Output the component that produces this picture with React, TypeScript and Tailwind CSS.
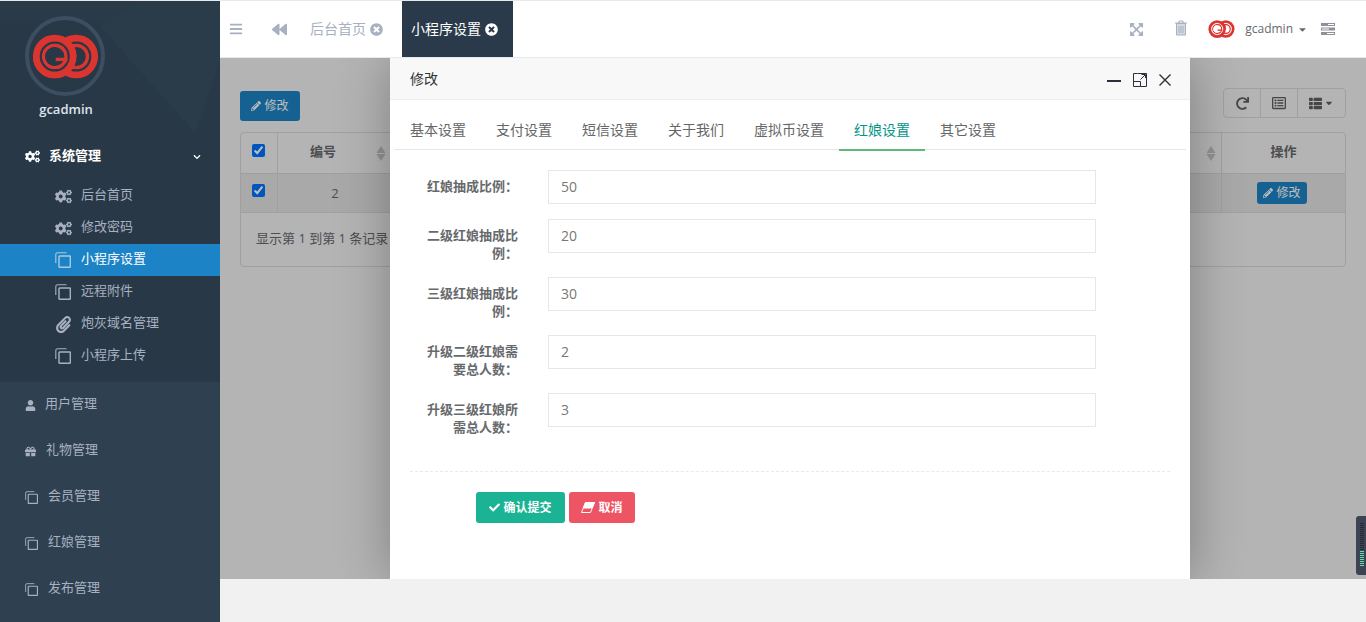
import { useId } from 'react'
import {
  FaBackward, FaBars, FaCaretDown, FaCheck, FaChevronDown, FaCogs, FaExpandArrowsAlt,
  FaGift, FaPaperclip, FaPencilAlt, FaRedo, FaRegListAlt, FaThList, FaTimesCircle, FaUser,
} from 'react-icons/fa'

function CopyIcon({ className }: { className?: string }) {
  return (
    <svg viewBox="0 0 16 16" className={className} fill="none" stroke="currentColor" strokeWidth="1.1">
      <path d="M11.5 .8H2.5a1.7 1.7 0 0 0-1.7 1.7V11" />
      <rect x="4" y="4" width="11.3" height="11.3" rx="0.6" strokeWidth="1.4" />
    </svg>
  )
}

function Logo({ gap, className }: { gap: string; className?: string }) {
  const id = useId()
  return (
    <svg viewBox="0 0 68 46" className={className}>
      <defs>
        <clipPath id={id}>
          <rect x="34" y="0" width="34" height="23" />
          <rect x="0" y="23" width="34" height="23" />
        </clipPath>
      </defs>
      <g fill="none">
        <circle cx="45" cy="23" r="18.5" stroke="#dc3530" strokeWidth="7.5" />
        <circle cx="45" cy="23" r="11.5" stroke="#dc3530" strokeWidth="3.5" />
        <circle cx="45" cy="23" r="14.4" stroke={gap} strokeWidth="2" />
        <circle cx="23" cy="23" r="18.5" stroke="#dc3530" strokeWidth="7.5" />
        <circle cx="23" cy="23" r="11.5" stroke="#dc3530" strokeWidth="3.5" />
        <circle cx="23" cy="23" r="14.4" stroke={gap} strokeWidth="2" />
        <g clipPath={`url(#${id})`}>
          <circle cx="23" cy="23" r="18.5" stroke="#dc3530" strokeWidth="7.5" />
          <circle cx="23" cy="23" r="14.4" stroke={gap} strokeWidth="2" />
        </g>
        <circle cx="23" cy="23" r="9.8" fill={gap} />
        <path d="M24 26h12" stroke="#dc3530" strokeWidth="3.5" />
      </g>
    </svg>
  )
}

function HeaderPattern() {
  return (
    <svg viewBox="0 0 220 132" preserveAspectRatio="none" className="absolute inset-0 h-full w-full">
      <rect width="220" height="132" fill="#293846" />
      <polygon points="0,0 220,0 220,60 195,132 100,20 0,20" fill="#2a3a49" />
      <polygon points="100,25 140,0 220,0 220,60 195,132" fill="#2a3b4a" />
    </svg>
  )
}

function SortIcon() {
  return (
    <svg viewBox="0 0 10 15" className="h-[15px] w-[10px]" fill="#c6c6c6">
      <path d="M5 0l4.5 7h-9zM5 15l4.5-7h-9z" />
    </svg>
  )
}

function EraserIcon() {
  return (
    <svg viewBox="0 0 14 11" className="h-[11px] w-[14px]" fill="none" stroke="#ffffff">
      <path d="M4.5 .5h9l-4 10h-9z" />
      <path d="M4.5 .5h9L11 6H2.3z" fill="#ffffff" />
    </svg>
  )
}

const subItems = [
  { label: '后台首页', icon: 'cogs' },
  { label: '修改密码', icon: 'cogs' },
  { label: '小程序设置', icon: 'copy', active: true },
  { label: '远程附件', icon: 'copy' },
  { label: '炮灰域名管理', icon: 'clip' },
  { label: '小程序上传', icon: 'copy' },
]

const tabs = ['基本设置', '支付设置', '短信设置', '关于我们', '虚拟币设置', '红娘设置', '其它设置']

const fields = [
  { label: '红娘抽成比例：', value: '50' },
  { label: '二级红娘抽成比例：', value: '20' },
  { label: '三级红娘抽成比例：', value: '30' },
  { label: '升级二级红娘需要总人数：', value: '2' },
  { label: '升级三级红娘所需总人数：', value: '3' },
]

function Sidebar() {
  return (
    <aside className="flex h-full w-[220px] shrink-0 flex-col overflow-hidden bg-[#2f4050] text-[13px] text-[#a7b1c2]">
      <div className="relative h-[132px] shrink-0 pl-[25px] pt-[15px]">
        <HeaderPattern />
        <div className="relative flex h-20 w-20 items-center justify-center rounded-full border-4 border-[#3d4e60]">
          <Logo gap="#293846" className="h-[45px] w-[67px] shrink-0" />
        </div>
        <div className="relative mt-1 w-[82px] text-center font-semibold leading-[18px] text-[#dfe4ed]">gcadmin</div>
      </div>
      <div className="h-[249px] shrink-0 bg-[#293846]">
        <div className="flex h-[47px] items-center pl-[25px] pr-[19px] font-semibold text-white">
          <FaCogs className="w-[15px] text-[15px]" />
          <span className="mb-0.5 ml-[9px] flex-1">系统管理</span>
          <FaChevronDown className="text-[8px]" />
        </div>
        {subItems.map((item) => (
          <div key={item.label} className={item.active ? 'flex h-8 items-center bg-[#1c84c6] pl-[55px] text-white' : 'flex h-8 items-center pl-[55px]'}>
            <span className={item.active ? 'flex w-[26px] text-[#a9c9e4]' : 'flex w-[26px]'}>
              {item.icon === 'cogs' && <FaCogs className="text-[17px]" />}
              {item.icon === 'copy' && <CopyIcon className="h-4 w-4" />}
              {item.icon === 'clip' && <FaPaperclip className="text-[17px]" />}
            </span>
            <span className="mb-0.5">{item.label}</span>
          </div>
        ))}
      </div>
      <div className="flex h-[46px] shrink-0 items-center pl-[25px]">
        <FaUser className="text-[11px]" />
        <span className="mb-0.5 ml-[9px]">用户管理</span>
      </div>
      <div className="flex h-[46px] shrink-0 items-center pl-[25px]">
        <FaGift className="text-[11px]" />
        <span className="mb-0.5 ml-[10px]">礼物管理</span>
      </div>
      {['会员管理', '红娘管理', '发布管理'].map((label) => (
        <div key={label} className="flex h-[46px] shrink-0 items-center pl-[25px]">
          <CopyIcon className="h-[13px] w-[13px]" />
          <span className="mb-0.5 ml-[10px]">{label}</span>
        </div>
      ))}
    </aside>
  )
}

function TopBar() {
  return (
    <header className="flex h-[56px] shrink-0 items-center bg-white pr-[31px] text-[#a7b1c2]">
      <FaBars className="ml-[9px] text-[14px]" />
      <FaBackward className="ml-[29px] text-[15px]" />
      <div className="ml-[23px] flex items-center gap-1 text-sm">
        <span>后台首页</span>
        <FaTimesCircle className="text-[13px]" />
      </div>
      <div className="ml-[19px] flex h-full w-[111px] items-center gap-1 bg-[#2b3a4a] pl-[9px] text-sm text-white">
        <span>小程序设置</span>
        <FaTimesCircle className="text-[13px]" />
      </div>
      <div className="ml-auto flex items-center text-[#a7b1c2]">
        <FaExpandArrowsAlt className="text-[15px]" />
        <svg viewBox="0 0 14 16" className="mb-0.5 ml-[30px] h-4 w-[14px]" fill="none" stroke="currentColor">
          <path d="M1 3h12M5 3V1h4v2" />
          <path d="M2.5 3.5h9V15h-9z" fill="#d5dae2" />
          <path d="M5 6v7M7 6v7M9 6v7" strokeWidth="1" />
        </svg>
        <Logo gap="#ffffff" className="ml-5 h-[18px] w-[27px]" />
        <span className="ml-[10px] text-xs text-[#676a6c]">gcadmin</span>
        <FaCaretDown className="ml-1 text-[11px] text-[#676a6c]" />
        <svg viewBox="0 0 14 12" className="ml-[13px] h-3 w-[14px]" fill="#8d9299">
          <path d="M0 0h14v3H0zM0 4.5h14v3H0zM0 9h14v3H0z" />
          <path d="M7 1h6v1H7zM1 5.5h7v1H1zM6 10h7v1H6z" fill="#ffffff" />
        </svg>
      </div>
    </header>
  )
}

function EditBtn({ className }: { className: string }) {
  return (
    <button className={`flex items-center justify-center gap-[3px] bg-[#1c84c6] text-xs text-white ${className}`}>
      <FaPencilAlt className="text-[10px]" />
      修改
    </button>
  )
}

function TablePanel() {
  return (
    <div className="px-5 pt-[30px] text-[13px] text-[#676a6c]">
      <div className="flex items-end justify-between">
        <EditBtn className="mb-[-3px] h-[30px] w-[60px] rounded-[3px]" />
        <div className="flex h-[30px] w-[123px] rounded-[4px] border border-[#d8d8d8] text-[#5f6163]">
          <div className="flex w-[37px] items-center justify-center border-r border-[#d8d8d8]">
            <FaRedo className="text-[13px]" />
          </div>
          <div className="flex w-[37px] items-center justify-center border-r border-[#d8d8d8]">
            <FaRegListAlt className="text-[14px]" />
          </div>
          <div className="flex flex-1 items-center justify-center gap-[2px]">
            <FaThList className="text-[13px]" />
            <FaCaretDown className="text-[10px]" />
          </div>
        </div>
      </div>
      <div className="mt-[14px] h-[135px] rounded-[4px] border border-[#d8d8d8]">
        <div className="flex h-[41px] border-b border-[#d8d8d8] font-bold">
          <div className="flex w-[37px] justify-center border-r border-[#d8d8d8] pr-px pt-[11px]">
            <input type="checkbox" defaultChecked className="m-0 h-[13px] w-[13px]" />
          </div>
          <div className="flex w-[115px] items-center justify-between border-r border-[#d8d8d8] pl-[32px] pr-[6px]">
            <span className="mb-0.5">编号</span>
            <SortIcon />
          </div>
          <div className="flex flex-1 items-center justify-end border-r border-[#d8d8d8] pr-[5px]">
            <SortIcon />
          </div>
          <div className="flex w-[123px] items-center justify-center pb-0.5">操作</div>
        </div>
        <div className="flex h-[39px] border-b border-[#d8d8d8] bg-[#e4e4e4]">
          <div className="flex w-[37px] justify-center border-r border-[#d8d8d8] pr-px pt-[10px]">
            <input type="checkbox" defaultChecked className="m-0 h-[13px] w-[13px]" />
          </div>
          <div className="flex w-[115px] items-center justify-center border-r border-[#d8d8d8] pt-0.5">2</div>
          <div className="flex-1 border-r border-[#d8d8d8]" />
          <div className="flex w-[123px] items-center justify-center">
            <EditBtn className="mr-[3px] h-[22px] w-[50px] rounded-[3px]" />
          </div>
        </div>
        <div className="pl-[15px] pt-4 leading-[18px]">显示第 1 到第 1 条记录</div>
      </div>
    </div>
  )
}

function Modal() {
  return (
    <div className="absolute bottom-0 left-[170px] top-0 w-[800px] bg-white shadow-[1px_1px_50px_rgba(0,0,0,0.3)]">
      <div className="flex h-[42px] items-center border-b border-[#eeeeee] bg-[#f8f8f8] pl-5 text-sm text-[#333333]">
        修改
        <div className="ml-auto mr-[19px] mt-[2px] flex items-center gap-3">
          <div className="mt-[2px] h-0.5 w-[14px] bg-[#2e2d3c]" />
          <svg viewBox="0 0 14 14" className="h-[14px] w-[14px]" fill="none" stroke="#2e2d3c">
            <path d="M4.5 .5h9v13h-6M.5 9V.5h4M.5 8.5h7v5h-7zM7.5 6.5 12 2M8.5 1.5H12.5V5" />
          </svg>
          <svg viewBox="0 0 12 12" className="h-3 w-3" fill="none" stroke="#2e2d3c" strokeWidth="1.4">
            <path d="M.5.5l11 11M11.5.5l-11 11" />
          </svg>
        </div>
      </div>
      <div className="mx-1 mt-3 flex h-[38px] border-b border-[#e6e6e6] pl-[1px] text-sm text-[#666666]">
        {tabs.map((tab) => (
          <div
            key={tab}
            className={tab === '红娘设置'
              ? 'mb-[-1px] flex h-[39px] items-center border-b-2 border-[#5fb878] px-[15px] pb-0.5 text-[#009688]'
              : 'flex h-[38px] items-center px-[15px] pb-0.5'}
          >
            {tab}
          </div>
        ))}
      </div>
      <form className="pt-5">
        {fields.map((field) => (
          <div key={field.label} className="mb-[15px] flex">
            <label className="ml-[37px] min-h-[34px] w-[91px] pt-[7px] text-right text-[13px] font-semibold leading-[18px] text-[#676a6c]">
              {field.label}
            </label>
            <input
              defaultValue={field.value}
              className="ml-[30px] h-[34px] w-[548px] border border-[#e5e6e7] px-3 pb-0.5 text-sm text-[#777777] outline-none"
            />
          </div>
        ))}
        <div className="mx-5 mt-[35px] border-t border-dashed border-[#e7eaec]" />
        <div className="ml-[86px] mt-5 flex gap-1">
          <button type="button" className="flex h-[31px] w-[89px] items-center justify-center gap-[3px] rounded-[3px] bg-[#1ab394] text-xs font-bold text-white">
            <FaCheck className="text-[11px]" />
            确认提交
          </button>
          <button type="button" className="flex h-[31px] w-[66px] items-center justify-center gap-[3px] rounded-[3px] bg-[#ed5565] text-xs font-bold text-white">
            <EraserIcon />
            取消
          </button>
        </div>
      </form>
    </div>
  )
}

export default function App() {
  const meter = Array.from({ length: 22 }, (_, i) => i)
  return (
    <div className="flex h-[622px] w-[1366px] flex-col overflow-hidden bg-white font-['Open_Sans','Noto_Sans_CJK_SC',sans-serif]">
      <div className="h-px shrink-0 bg-[#e7eaec]" />
      <div className="flex min-h-0 flex-1">
        <Sidebar />
        <main className="flex min-w-0 flex-1 flex-col">
          <TopBar />
          <div className="relative h-[522px] shrink-0 overflow-hidden border-t border-[#e7eaec] bg-[#f3f3f4]">
            <TablePanel />
            <div className="absolute inset-0 bg-black/[0.26]" />
            <Modal />
            <div className="absolute right-0 top-[458px] flex h-[59px] w-[10px] flex-col gap-px rounded-l-[3px] bg-[#3c4454] py-[7px] pl-1">
              {meter.map((i) => (
                <div key={i} className={i > 13 ? 'h-px w-1 bg-[#63dcae]' : 'h-px w-1 bg-[#262b36]'} />
              ))}
            </div>
          </div>
          <div className="flex-1 bg-[#f1f1f1]" />
        </main>
      </div>
    </div>
  )
}
